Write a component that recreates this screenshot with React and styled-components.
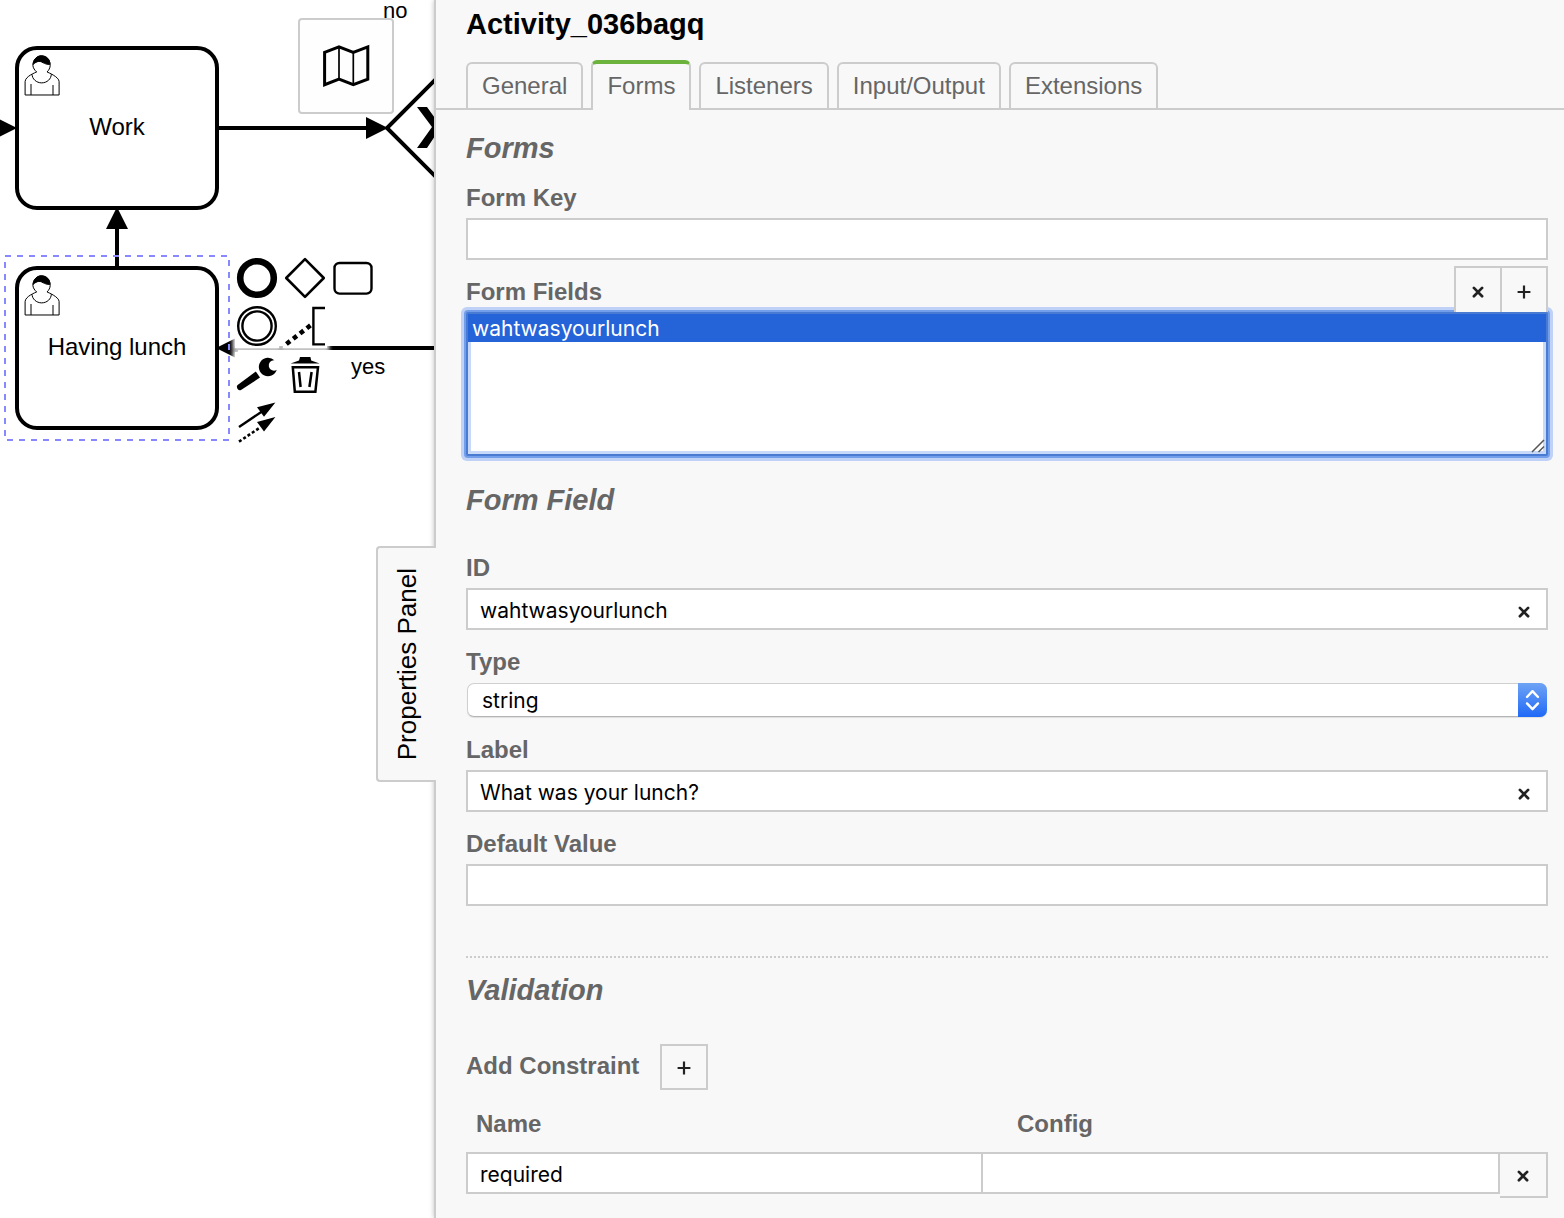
import React, { useState } from 'react';
import styled, { createGlobalStyle, css } from 'styled-components';

const line = '#cccccc';
const surface = '#f8f8f8';
const muted = '#666666';
const uiFont = '"Liberation Sans", Arial, sans-serif';
const fieldFont = 'Inter, "Liberation Sans", sans-serif';

const GlobalStyle = createGlobalStyle`
  *, *::before, *::after { box-sizing: border-box; }
  body { margin: 0; background: #fff; color: #000; font: 24px/28px ${uiFont}; }
  button, input, select { margin: 0; border-radius: 0; }
  button { cursor: pointer; }
`;

const Workspace = styled.div`
  display: flex;
  min-height: 100vh;
`;

/* ---------- diagram ---------- */

const Canvas = styled.main`
  position: relative;
  flex: 0 0 434px;
  overflow: hidden;
`;

const Connections = styled.svg`
  position: absolute;
  inset: 0;
  width: 100%;
  height: 100%;
`;

const TaskNode = styled.div`
  position: absolute;
  left: 15px;
  top: ${(p) => p.$top}px;
  width: 204px;
  height: 164px;
  padding-bottom: 2px;
  display: flex;
  align-items: center;
  justify-content: center;
  background: #fff;
  border: 4px solid #000;
  border-radius: 22px;
`;

const UserGlyph = styled.svg`
  position: absolute;
  left: -2px;
  top: -2px;
  width: 60px;
  height: 60px;
  fill: #fff;
  stroke: #000;
  stroke-width: 0.5;
`;

const EdgeLabel = styled.span`
  position: absolute;
  left: ${(p) => p.$left}px;
  top: ${(p) => p.$top}px;
  font-size: 22px;
  line-height: 22px;
`;

const MinimapToggle = styled.button`
  position: absolute;
  left: 298px;
  top: 18px;
  width: 96px;
  height: 96px;
  padding: 0;
  display: grid;
  place-items: center;
  background: #fefefe;
  border: 2px solid ${line};
  border-radius: 4px;
`;

const ContextPad = styled.div`
  position: absolute;
  left: 235px;
  top: 256px;
  display: grid;
  gap: 4px;
`;

const PadRow = styled.div`
  display: flex;
  gap: 4px;
`;

const PadEntry = styled.button`
  width: 44px;
  height: 44px;
  padding: 0;
  border: 0;
  background: #fff;
  box-shadow: 0 0 4px 2px #fff;

  svg {
    display: block;
  }
`;

const SelectionOutline = styled.svg`
  position: absolute;
  left: 4px;
  top: 255px;
  fill: none;
  stroke: #8888ff;
  stroke-width: 2;
  stroke-dasharray: 6 6;
  pointer-events: none;
`;

function UserIcon() {
  return (
    <UserGlyph viewBox="0 0 30 30" aria-hidden="true">
      <path d="m15,12 c0.909,-0.845 1.594,-2.049 1.594,-3.385 0,-2.554 -1.805,-4.622 -4.357,-4.622 -2.552,0 -4.288,2.068 -4.288,4.622 0,1.348 0.974,2.562 1.896,3.405 -0.529,0.187 -5.669,2.097 -5.794,4.756 v6.718 h17 v-6.718 c0,-2.298 -5.528,-4.595 -6.051,-4.776 z m-8,6 l0,5.5 m11,0 l0,-5" />
      <path d="m15,12 m2.162,1.009 c0,2.447 -2.158,4.431 -4.821,4.431 -2.663,0 -4.822,-1.981 -4.822,-4.431" />
      <path fill="#000" d="m15,12 m-6.9,-3.8 c0,0 2.251,-2.358 4.274,-1.177 2.024,1.181 4.221,1.537 4.124,0.965 -0.098,-0.57 -0.117,-3.791 -4.191,-4.136 -3.575,0.001 -4.208,3.67 -4.207,4.348 z" />
    </UserGlyph>
  );
}

const padIcons = [
  [
    ['Append end event', <circle key="i" cx="22" cy="22" r="16.8" fill="none" stroke="#000" strokeWidth="6.6" />],
    ['Append gateway', <path key="i" d="M22 3.2 40.8 22 22 40.8 3.2 22Z" fill="none" stroke="#000" strokeWidth="2.6" strokeLinejoin="round" />],
    ['Append task', <rect key="i" x="3.5" y="7" width="37" height="30.6" rx="5" fill="none" stroke="#000" strokeWidth="2.4" />],
  ],
  [
    ['Append intermediate event', (
      <g key="i" fill="none" stroke="#000" strokeWidth="2.4">
        <circle cx="22" cy="22" r="18.8" />
        <circle cx="22" cy="22" r="14.6" />
      </g>
    )],
    ['Append text annotation', (
      <g key="i">
        <path d="M42 4H30.4V40.4H42" fill="none" stroke="#000" strokeWidth="2.4" />
        <path d="M3.4 40 28.5 20.6" fill="none" stroke="#000" strokeWidth="4.6" strokeDasharray="4.6 4" />
      </g>
    )],
  ],
  [
    ['Change type', (
      <g key="i">
        <path d="M2.6 33 20.8 19.6 25 25.6 6 38Q4.2 39 2.6 37Q1.2 34.6 2.6 33Z" />
        <path d="M39.4 8.3A9.2 9.2 0 1 0 41.8 17.8A5.2 5.2 0 1 1 39.4 8.3Z" />
      </g>
    )],
    ['Remove', (
      <g key="i">
        <path d="M7.6 11.6 16 8.6 17 5H27.4L28.2 8.6 36.6 11.6Z" />
        <path d="M9.8 15.2H35L32.4 39.7H11.8Z M16 20 17.6 35 M28.6 20 26.4 35" fill="none" stroke="#000" strokeWidth="2.5" />
      </g>
    )],
  ],
  [
    ['Connect', (
      <g key="i">
        <path d="M4 27 27 11.5" stroke="#000" strokeWidth="2.4" />
        <path d="M4 41.7 25 27.5" stroke="#000" strokeWidth="2.6" strokeDasharray="3 2.2" />
        <path d="M40.4 2.6 22 7.3 29 16.8Z M40.4 17 22 22 29 31.4Z" />
      </g>
    )],
  ],
];

function Diagram() {
  return (
    <Canvas aria-label="Process diagram">
      <Connections aria-hidden="true">
        <g stroke="#000" strokeWidth="4" fill="none">
          <path d="M219 128H370" />
          <path d="M117 266V226" />
          <path d="M434 348H232" />
          <path d="M437 78 387 128 437 178" />
        </g>
        <path d="M-5 117 17 128-5 139Z M366 117 388 128 366 139Z M106 229 117 207 128 229Z M238 337 216 348 238 359Z" />
        <path d="M417 107H427L437 121 447 107H457L443 127 457 148H447L437 133 427 148H417L432 127Z" />
      </Connections>
      <TaskNode $top={46}>
        <UserIcon />
        Work
      </TaskNode>
      <TaskNode $top={266}>
        <UserIcon />
        Having lunch
      </TaskNode>
      <MinimapToggle aria-label="Toggle minimap">
        <svg width="48" height="48" viewBox="0 0 48 48" fill="none" stroke="#000" aria-hidden="true">
          <path d="M2.6 10.3 17 4.8 31.3 10.3 45.8 4.8V37.2L31.3 42.7 17 37.2 2.6 42.7Z" strokeWidth="3" />
          <path d="M17 4.8V37.2M31.3 10.3V42.7" strokeWidth="1.7" />
        </svg>
      </MinimapToggle>
      <EdgeLabel $left={383} $top={0}>no</EdgeLabel>
      <EdgeLabel $left={351} $top={356}>yes</EdgeLabel>
      <ContextPad>
        {padIcons.map((row) => (
          <PadRow key={row[0][0]}>
            {row.map(([label, icon]) => (
              <PadEntry key={label} aria-label={label}>
                <svg width="44" height="44" viewBox="0 0 44 44" aria-hidden="true">{icon}</svg>
              </PadEntry>
            ))}
          </PadRow>
        ))}
      </ContextPad>
      <SelectionOutline width="226" height="186" aria-hidden="true">
        <rect x="1" y="1" width="224" height="184" />
      </SelectionOutline>
    </Canvas>
  );
}

/* ---------- properties panel ---------- */

const Panel = styled.aside`
  position: relative;
  flex: 1;
  min-width: 0;
  padding-bottom: 20px;
  background: ${surface};
  border-left: 2px solid ${line};
  box-shadow: 0 0 5px rgba(0, 0, 0, 0.25);
`;

const PanelToggle = styled.button`
  position: absolute;
  left: -60px;
  top: 546px;
  width: 60px;
  height: 236px;
  padding: 0;
  display: grid;
  place-items: center;
  background: ${surface};
  border: 2px solid ${line};
  border-right: 0;
  border-radius: 4px 0 0 4px;
  color: #000;
  font: 26px/30px ${uiFont};

  span {
    writing-mode: vertical-rl;
    transform: rotate(180deg);
  }
`;

const Title = styled.h1`
  margin: 0;
  padding: 8px 16px 20px 30px;
  font-size: 29px;
  line-height: 32px;
`;

const TabBar = styled.div`
  display: flex;
  align-items: flex-end;
  gap: 8px;
  padding-left: 30px;
  border-bottom: 2px solid ${line};
`;

const Tab = styled.button`
  padding: 8px 14px;
  background: ${surface};
  border: 2px solid ${line};
  border-bottom: 0;
  border-radius: 6px 6px 0 0;
  color: ${muted};
  font: 24px/28px ${uiFont};

  ${(p) =>
    p.$active &&
    css`
      margin-bottom: -2px;
      padding-bottom: 10px;
      border-top: 4px solid #6cb33e;
    `}
`;

const Section = styled.section`
  padding: ${(p) => p.$top}px 16px 0 30px;
`;

const Heading = styled.h2`
  margin: 0 0 ${(p) => (p.$tight ? 1 : 19)}px;
  color: ${muted};
  font-size: 29px;
  line-height: 34px;
  font-style: italic;
`;

const Field = styled.div`
  padding-top: 18px;
`;

const Label = styled.label`
  display: block;
  margin-bottom: 6px;
  color: ${muted};
  font-weight: bold;
`;

const InputWrap = styled.div`
  position: relative;
`;

const TextInput = styled.input`
  display: block;
  width: 100%;
  height: 42px;
  padding: 2px 12px 0;
  background: #fff;
  border: 2px solid ${line};
  border-left-width: ${(p) => (p.$joined ? 0 : 2)}px;
  outline: 0;
  color: #000;
  font: 21px/28px ${fieldFont};
`;

const ClearButton = styled.button`
  position: absolute;
  right: 2px;
  top: 2px;
  width: 44px;
  height: 38px;
  padding: 6px 0 0;
  display: grid;
  place-items: center;
  background: transparent;
  border: 0;
`;

const SquareButton = styled.button`
  flex: none;
  width: 48px;
  height: 46px;
  padding: 1px 0 0;
  display: grid;
  place-items: center;
  background: ${surface};
  border: 2px solid ${line};

  ${(p) =>
    p.$joined &&
    css`
      width: ${p.$joined === 'cell' ? 48 : 46}px;
      border-left: 0;
    `}
  ${(p) =>
    p.$open &&
    css`
      padding-top: 4px;
      border-bottom: 0;
    `}
`;

const ListHeader = styled.div`
  display: flex;
  align-items: flex-end;
  justify-content: space-between;
  padding-top: 6px;
`;

const ButtonGroup = styled.div`
  position: relative;
  z-index: 1;
  display: flex;
`;

const ListFrame = styled.div`
  position: relative;
`;

const ListBox = styled.select`
  display: block;
  width: 100%;
  height: 144px;
  padding: 0;
  overflow: hidden;
  background: #fff;
  border: 2px solid #4a7bd3;
  border-radius: 2px;
  outline: 0;
  box-shadow:
    0 0 0 2px #739eea,
    0 0 0 5px #bfd1f6,
    inset 0 0 0 3px #c8d8f8;
  font: 21px/28px ${fieldFont};

  option {
    height: 28px;
    min-height: 28px;
    padding: 2px 4px 0;
    line-height: 26px;
  }

  option:checked {
    background: #2563d9 linear-gradient(#2563d9, #2563d9);
    color: #fff;
    -webkit-text-fill-color: #fff;
  }
`;

const ResizeGrip = styled.svg`
  position: absolute;
  right: 3px;
  bottom: 3px;
  pointer-events: none;
`;

const SelectWrap = styled.div`
  position: relative;
  padding: 1px;
`;

const Select = styled.select`
  display: block;
  width: 100%;
  height: 34px;
  padding: 2px 40px 0 14px;
  appearance: none;
  background: #fff;
  border: 1px solid #d0d0d0;
  border-bottom-color: #b4b4b4;
  border-radius: 7px;
  box-shadow: 0 1px 1px rgba(0, 0, 0, 0.1);
  outline: 0;
  color: #000;
  font: 21px/28px ${fieldFont};
`;

const SelectCap = styled.span`
  position: absolute;
  right: 1px;
  top: 1px;
  width: 29px;
  height: 34px;
  display: grid;
  place-items: center;
  background: linear-gradient(#6fa3f5, #1f69f6);
  border-radius: 0 7px 7px 0;
  pointer-events: none;
`;

const Divider = styled.hr`
  height: 0;
  margin: 50px 16px 0 30px;
  border: 0;
  border-top: 2px dotted ${line};
`;

const ConstraintRow = styled.div`
  display: flex;
  align-items: flex-start;
  gap: 21px;
  padding: 18px 0 20px;
`;

const ConstraintLabel = styled(Label)`
  padding-top: 8px;
  margin-bottom: 0;
`;

const ConstraintTable = styled.table`
  width: 100%;
  table-layout: fixed;
  border-collapse: collapse;

  th {
    padding: 0 10px 14px;
    color: ${muted};
    text-align: left;
  }

  th + th {
    padding-left: 34px;
  }

  td {
    padding: 0;
    vertical-align: top;
  }
`;

const ActionCol = styled.col`
  width: 48px;
`;

const Cross = () => (
  <svg width="12" height="12" viewBox="0 0 12 12" aria-hidden="true">
    <path d="M1.9 1.9 10.1 10.3M10.1 1.9 1.9 10.3" stroke="#222" strokeWidth="2.7" strokeLinecap="round" />
  </svg>
);

const Plus = () => (
  <svg width="14" height="14" viewBox="0 0 14 14" aria-hidden="true">
    <path d="M7 .6V13.4M.6 7H13.4" stroke="#222" strokeWidth="2.2" />
  </svg>
);

function TextField({ id, label, initial = '', clearable }) {
  const [value, setValue] = useState(initial);
  return (
    <Field>
      <Label htmlFor={id}>{label}</Label>
      <InputWrap>
        <TextInput id={id} type="text" value={value} onChange={(e) => setValue(e.target.value)} />
        {clearable && (
          <ClearButton aria-label={`Clear ${label}`} onClick={() => setValue('')}>
            <Cross />
          </ClearButton>
        )}
      </InputWrap>
    </Field>
  );
}

const tabs = ['General', 'Forms', 'Listeners', 'Input/Output', 'Extensions'];

function PropertiesPanel() {
  const [active, setActive] = useState('Forms');
  return (
    <Panel>
      <PanelToggle>
        <span>Properties Panel</span>
      </PanelToggle>
      <Title>Activity_036bagq</Title>
      <TabBar role="tablist">
        {tabs.map((tab) => (
          <Tab key={tab} role="tab" aria-selected={tab === active} $active={tab === active} onClick={() => setActive(tab)}>
            {tab}
          </Tab>
        ))}
      </TabBar>

      <Section $top={21}>
        <Heading $tight>Forms</Heading>
        <TextField id="form-key" label="Form Key" />
        <ListHeader>
          <Label htmlFor="form-fields">Form Fields</Label>
          <ButtonGroup>
            <SquareButton $open aria-label="Remove form field">
              <Cross />
            </SquareButton>
            <SquareButton $open $joined="group" aria-label="Add form field">
              <Plus />
            </SquareButton>
          </ButtonGroup>
        </ListHeader>
        <ListFrame>
          <ListBox id="form-fields" size={5} defaultValue="wahtwasyourlunch">
            <option>wahtwasyourlunch</option>
          </ListBox>
          <ResizeGrip width="14" height="14" viewBox="0 0 14 14" aria-hidden="true">
            <path d="M1 13 13 1M7.5 13 13 7.5" stroke="#555" strokeWidth="1.5" />
          </ResizeGrip>
        </ListFrame>
      </Section>

      <Section $top={27}>
        <Heading>Form Field</Heading>
        <TextField id="field-id" label="ID" initial="wahtwasyourlunch" clearable />
        <Field>
          <Label htmlFor="field-type">Type</Label>
          <SelectWrap>
            <Select id="field-type" defaultValue="string">
              <option>string</option>
              <option>long</option>
              <option>boolean</option>
              <option>date</option>
              <option>enum</option>
            </Select>
            <SelectCap>
              <svg width="16" height="22" viewBox="0 0 16 22" fill="none" stroke="#fff" strokeWidth="2.4" strokeLinecap="round" strokeLinejoin="round" aria-hidden="true">
                <path d="M2 8 7.5 2.2 13 8M2 14.4 7.5 20.2 13 14.4" />
              </svg>
            </SelectCap>
          </SelectWrap>
        </Field>
        <TextField id="field-label" label="Label" initial="What was your lunch?" clearable />
        <TextField id="field-default" label="Default Value" />
      </Section>

      <Divider />

      <Section $top={15}>
        <Heading>Validation</Heading>
        <ConstraintRow>
          <ConstraintLabel htmlFor="add-constraint">Add Constraint</ConstraintLabel>
          <SquareButton id="add-constraint">
            <Plus />
          </SquareButton>
        </ConstraintRow>
        <ConstraintTable>
          <colgroup>
            <col />
            <col />
            <ActionCol />
          </colgroup>
          <thead>
            <tr>
              <th scope="col">Name</th>
              <th scope="col">Config</th>
              <td />
            </tr>
          </thead>
          <tbody>
            <tr>
              <td>
                <TextInput type="text" aria-label="Name" defaultValue="required" />
              </td>
              <td>
                <TextInput $joined type="text" aria-label="Config" />
              </td>
              <td>
                <SquareButton $joined="cell" aria-label="Remove constraint">
                  <Cross />
                </SquareButton>
              </td>
            </tr>
          </tbody>
        </ConstraintTable>
      </Section>
    </Panel>
  );
}

export default function App() {
  return (
    <>
      <GlobalStyle />
      <Workspace>
        <Diagram />
        <PropertiesPanel />
      </Workspace>
    </>
  );
}
